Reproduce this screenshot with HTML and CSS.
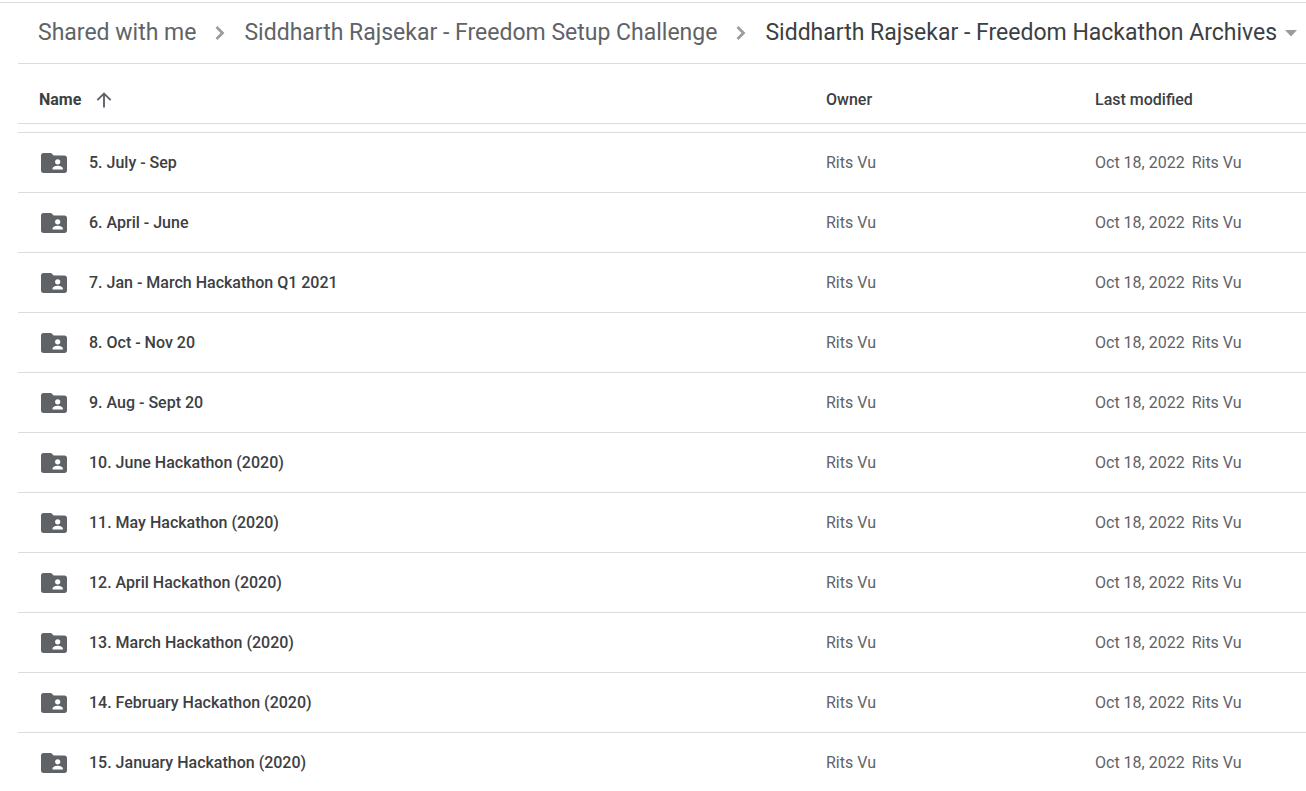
FILE: index.html
```html
<!DOCTYPE html>
<html lang="en">
<head>
    <meta charset="UTF-8">
    <meta name="viewport" content="width=device-width, initial-scale=1.0">
    <title>Siddharth Rajsekar - Freedom Hackathon Archives</title>
    <link rel="stylesheet" href="styles.css">
</head>
<body>
    <!-- Icons used more than once -->
    <svg class="sprite" aria-hidden="true">
        <symbol id="chevron" viewBox="0 0 10 16">
            <path d="M1.500 2L7.500 8l-6 6" fill="none" stroke="currentColor" stroke-width="2.700"/>
        </symbol>
        <symbol id="folder" viewBox="0 0 26 20">
            <path fill="currentColor" d="M2.500 0h7.600l2.600 2.400h10.800C25 2.400 26 3.500 26 4.900v12.600c0 1.400-1 2.500-2.500 2.500h-21C1 20 0 18.900 0 17.500v-15C0 1.100 1 0 2.500 0z"/>
            <circle cx="16.700" cy="8.800" r="2.600" fill="#fff"/>
            <path fill="#fff" d="M11.600 16.500v-1.200c0-1.700 3.400-2.600 5.100-2.600s5.100.9 5.100 2.600v1.200z"/>
        </symbol>
    </svg>

    <!-- Breadcrumbs -->
    <nav class="breadcrumbs" aria-label="Breadcrumb">
        <a href="#">Shared with me</a>
        <svg class="chevron" aria-hidden="true"><use href="#chevron"/></svg>
        <a href="#">Siddharth Rajsekar - Freedom Setup Challenge</a>
        <svg class="chevron" aria-hidden="true"><use href="#chevron"/></svg>
        <button class="current" type="button">
            Siddharth Rajsekar - Freedom Hackathon Archives
            <svg class="caret" viewBox="0 0 12 7" aria-hidden="true"><path fill="currentColor" d="M0 0h12L6 6.500z"/></svg>
        </button>
    </nav>

    <!-- File list -->
    <main class="files">
        <table>
            <thead>
                <tr>
                    <th class="name" scope="col">
                        <button class="sort" type="button">
                            Name
                            <svg class="arrow" viewBox="0 0 16 16" aria-hidden="true"><path fill="none" stroke="currentColor" stroke-width="1.900" d="M8 15.500V1.800M1.300 8.200L8 1.500l6.700 6.700"/></svg>
                        </button>
                    </th>
                    <th class="owner" scope="col">Owner</th>
                    <th class="modified" scope="col">Last modified</th>
                </tr>
            </thead>
            <tbody>
                <tr>
                    <td><a class="folder" href="#"><svg aria-hidden="true"><use href="#folder"/></svg>5. July - Sep</a></td>
                    <td>Rits Vu</td>
                    <td>Oct 18, 2022 <span class="by">Rits Vu</span></td>
                </tr>
                <tr>
                    <td><a class="folder" href="#"><svg aria-hidden="true"><use href="#folder"/></svg>6. April - June</a></td>
                    <td>Rits Vu</td>
                    <td>Oct 18, 2022 <span class="by">Rits Vu</span></td>
                </tr>
                <tr>
                    <td><a class="folder" href="#"><svg aria-hidden="true"><use href="#folder"/></svg>7. Jan - March Hackathon Q1 2021</a></td>
                    <td>Rits Vu</td>
                    <td>Oct 18, 2022 <span class="by">Rits Vu</span></td>
                </tr>
                <tr>
                    <td><a class="folder" href="#"><svg aria-hidden="true"><use href="#folder"/></svg>8. Oct - Nov 20</a></td>
                    <td>Rits Vu</td>
                    <td>Oct 18, 2022 <span class="by">Rits Vu</span></td>
                </tr>
                <tr>
                    <td><a class="folder" href="#"><svg aria-hidden="true"><use href="#folder"/></svg>9. Aug - Sept 20</a></td>
                    <td>Rits Vu</td>
                    <td>Oct 18, 2022 <span class="by">Rits Vu</span></td>
                </tr>
                <tr>
                    <td><a class="folder" href="#"><svg aria-hidden="true"><use href="#folder"/></svg>10. June Hackathon (2020)</a></td>
                    <td>Rits Vu</td>
                    <td>Oct 18, 2022 <span class="by">Rits Vu</span></td>
                </tr>
                <tr>
                    <td><a class="folder" href="#"><svg aria-hidden="true"><use href="#folder"/></svg>11. May Hackathon (2020)</a></td>
                    <td>Rits Vu</td>
                    <td>Oct 18, 2022 <span class="by">Rits Vu</span></td>
                </tr>
                <tr>
                    <td><a class="folder" href="#"><svg aria-hidden="true"><use href="#folder"/></svg>12. April Hackathon (2020)</a></td>
                    <td>Rits Vu</td>
                    <td>Oct 18, 2022 <span class="by">Rits Vu</span></td>
                </tr>
                <tr>
                    <td><a class="folder" href="#"><svg aria-hidden="true"><use href="#folder"/></svg>13. March Hackathon (2020)</a></td>
                    <td>Rits Vu</td>
                    <td>Oct 18, 2022 <span class="by">Rits Vu</span></td>
                </tr>
                <tr>
                    <td><a class="folder" href="#"><svg aria-hidden="true"><use href="#folder"/></svg>14. February Hackathon (2020)</a></td>
                    <td>Rits Vu</td>
                    <td>Oct 18, 2022 <span class="by">Rits Vu</span></td>
                </tr>
                <tr>
                    <td><a class="folder" href="#"><svg aria-hidden="true"><use href="#folder"/></svg>15. January Hackathon (2020)</a></td>
                    <td>Rits Vu</td>
                    <td>Oct 18, 2022 <span class="by">Rits Vu</span></td>
                </tr>
            </tbody>
        </table>
    </main>
</body>
</html>
```
FILE: styles.css
```css
* {
    box-sizing: border-box;
}
body {
    margin: 0;
    padding-top: 2px;
    height: 100vh;
    overflow: hidden;
    background-color: #fff;
    color: #3c4043;
    font-family: Roboto, Arial, sans-serif;
    font-size: 16px;
    line-height: 20px;
}
a {
    color: inherit;
    text-decoration: none;
}
button {
    padding: 0;
    border: none;
    background: none;
    color: inherit;
    font: inherit;
    cursor: pointer;
}
.sprite {
    display: none;
}
.breadcrumbs {
    display: flex;
    align-items: center;
    gap: 19px;
    height: 61px;
    padding-left: 38px;
    border-top: 1px solid #dadce0;
    color: #5f6368;
    font-family: "Google Sans", Roboto, Arial, sans-serif;
    font-size: 23px;
    line-height: 28px;
    white-space: nowrap;
}
.chevron {
    flex: none;
    width: 10px;
    height: 16px;
    color: #9a9b9e;
}
.current {
    display: flex;
    align-items: center;
    gap: 8px;
    color: #3c4043;
}
.caret {
    width: 12px;
    height: 7px;
    color: #9a9b9e;
}
.files {
    margin-left: 18px;
    border-top: 1px solid #dadce0;
}
table {
    width: 100%;
    table-layout: fixed;
    border-spacing: 0;
}
th, td {
    padding: 0;
    text-align: left;
    white-space: nowrap;
}
th {
    height: 60px;
    padding-top: 12px;
    border-bottom: 1px solid #dadce0;
    font-weight: 500;
}
/* strip of the row scrolled under the header */
tbody::before {
    content: "";
    display: table-row;
    height: 8px;
}
td {
    height: 60px;
    border-top: 1px solid #dadce0;
    color: #5f6368;
}
.owner {
    width: 269px;
}
.modified {
    width: 211px;
}
.sort {
    display: flex;
    align-items: center;
    gap: 15px;
    margin-left: 21px;
    font-weight: 700;
}
.arrow {
    width: 16px;
    height: 16px;
    color: #5f6368;
}
.folder {
    display: flex;
    align-items: center;
    gap: 22px;
    padding-left: 23px;
    color: #3c4043;
    font-weight: 500;
}
.folder svg {
    width: 26px;
    height: 20px;
    color: #5f6368;
}
.by {
    margin-left: 3px;
}
```
